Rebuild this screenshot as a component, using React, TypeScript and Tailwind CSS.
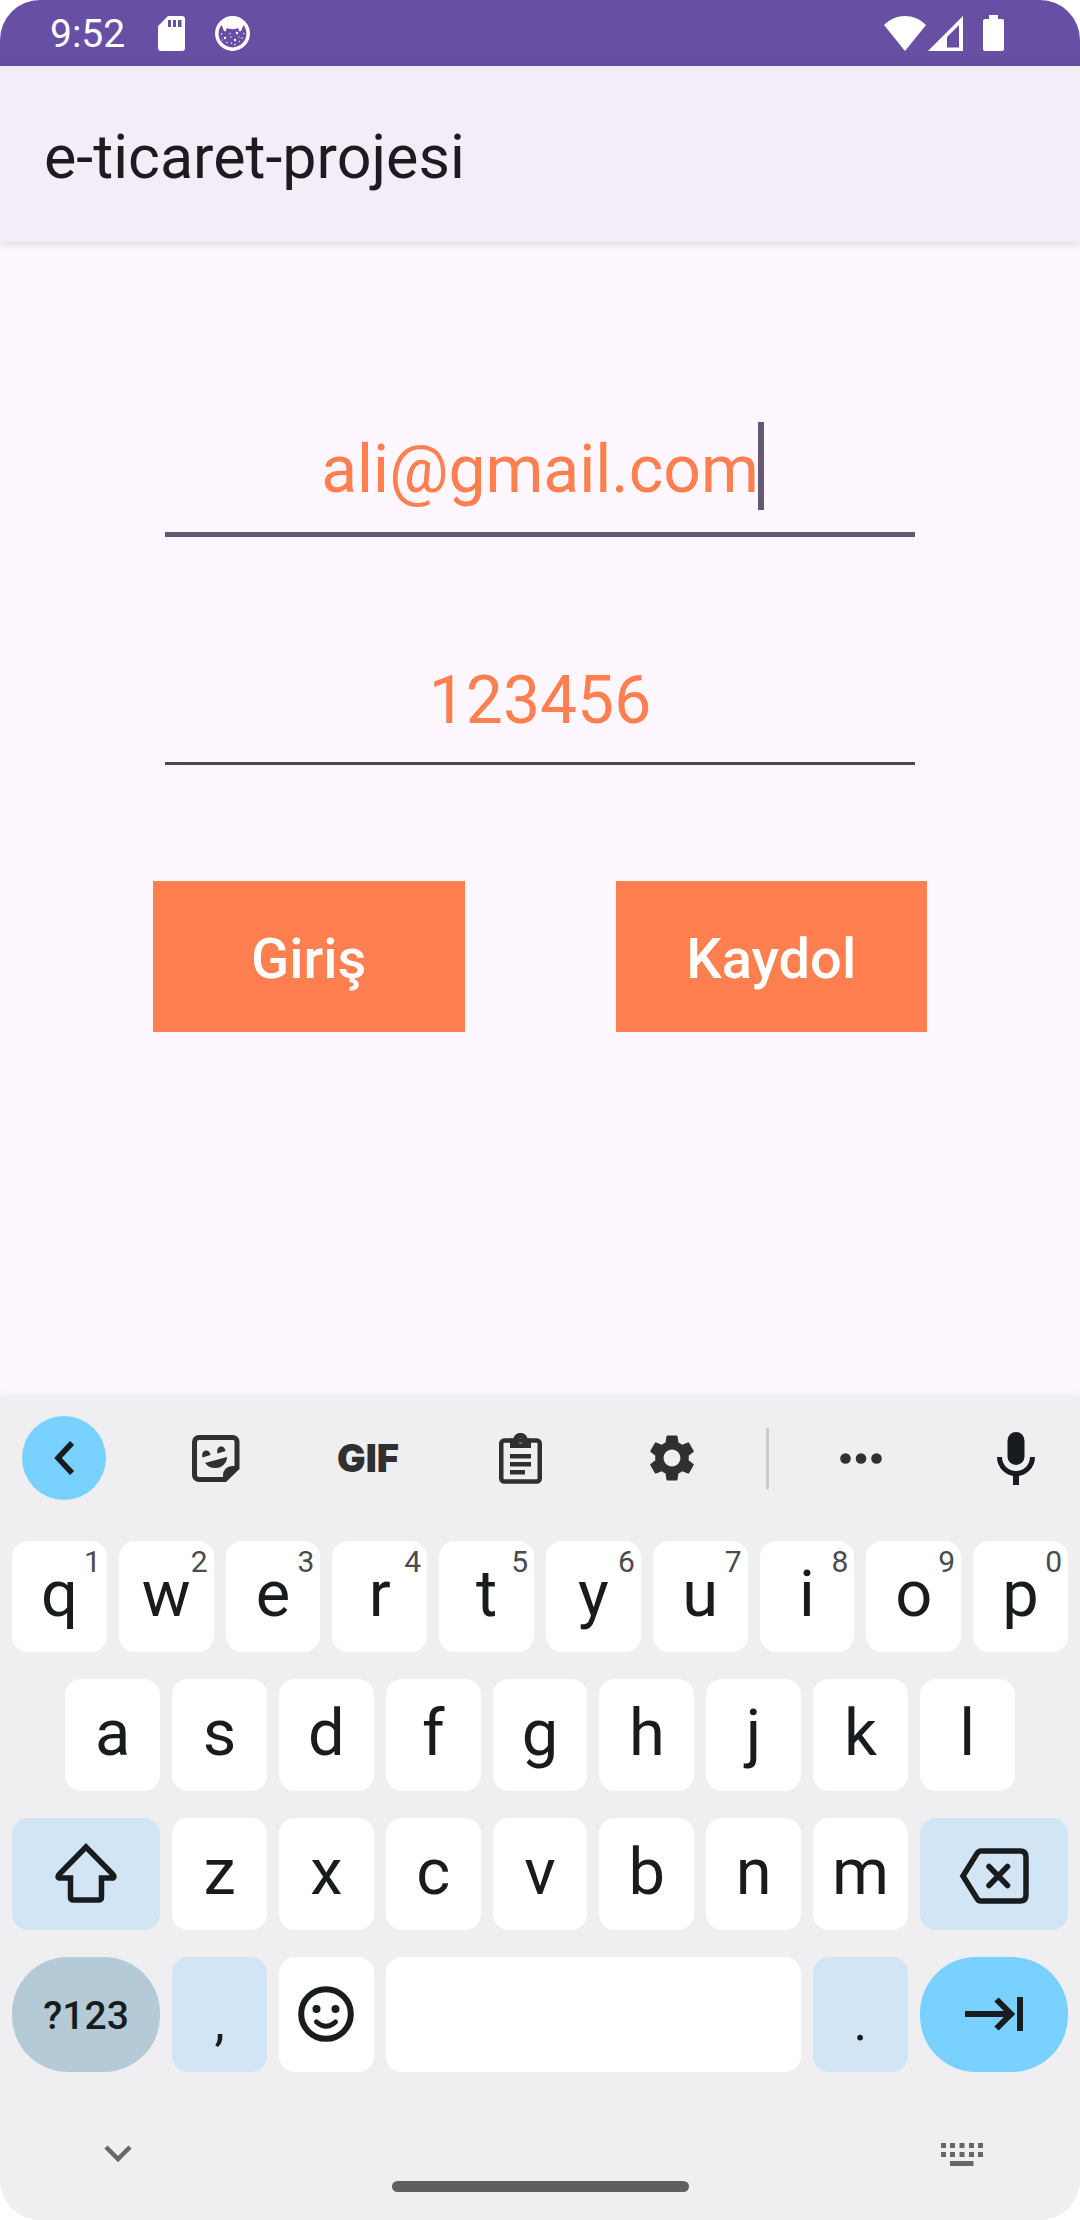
import React from "react";
import { MdSettings } from "react-icons/md";

const INK = "#191c1e";
const TOOL = "#303030";

function StatusBar() {
  return (
    <div className="flex h-[66px] items-center justify-between bg-[#6750a4] pl-[50px] pr-[76px] text-white">
      <div className="flex items-center">
        <span className="w-[108px] pt-[2px] text-[39px] leading-[64px]">9:52</span>
        <svg width="27" height="35" viewBox="0 0 27 35" fill="currentColor" aria-hidden="true">
          <path
            fillRule="evenodd"
            d="M10 0H24a3 3 0 0 1 3 3V32a3 3 0 0 1-3 3H3a3 3 0 0 1-3-3V10ZM10 4v7h3V4ZM15 4v7h3V4ZM20 4v7h3.500V4Z"
          />
        </svg>
        <svg className="ml-[30px]" width="35" height="35" viewBox="0 0 35 35" fill="currentColor" aria-hidden="true">
          <circle cx="17.500" cy="17.500" r="15.700" fill="none" stroke="currentColor" strokeWidth="3.500" />
          <path d="M5 8C8 3 12 1 17.500 1S27 3 30 8L28 10l-2 5-1.500 0.500L23 12C20 13.500 15 13.500 12 12l-1.500 3.500L9 15 7 10Z" />
          <g>
            <circle cx="10" cy="22" r="1.200" />
            <circle cx="20" cy="24" r="1.200" />
            <circle cx="22" cy="17" r="1.200" />
            <circle cx="15" cy="17.500" r="0.700" />
            <circle cx="16" cy="21" r="0.700" />
            <circle cx="27" cy="22" r="0.800" />
            <circle cx="24" cy="21" r="0.600" />
            <circle cx="6.500" cy="18" r="0.700" />
            <circle cx="7.500" cy="24" r="0.600" />
            <circle cx="12" cy="26.500" r="0.700" />
            <circle cx="16.500" cy="27" r="0.700" />
            <circle cx="20" cy="28.500" r="0.800" />
            <circle cx="24.500" cy="25.500" r="0.700" />
            <circle cx="29" cy="17.500" r="0.700" />
          </g>
        </svg>
      </div>
      <div className="flex items-center">
        <svg width="42" height="35" viewBox="0 0 42 35" fill="currentColor" aria-hidden="true">
          <path d="M0 9C12-3 30-3 42 9L21 35Z" />
        </svg>
        <svg className="ml-[2px]" width="35" height="35" viewBox="0 0 35 35" fill="currentColor" aria-hidden="true">
          <path fillRule="evenodd" d="M0 35 35 0V35ZM19 21V31.500H31V9Z" />
        </svg>
        <svg className="ml-5" width="21" height="36" viewBox="0 0 21 36" fill="currentColor" aria-hidden="true">
          <path d="M6 0h9v4h4a2 2 0 0 1 2 2v28a2 2 0 0 1-2 2H2a2 2 0 0 1-2-2V6a2 2 0 0 1 2-2h4Z" />
        </svg>
      </div>
    </div>
  );
}

function LoginForm() {
  return (
    <form className="px-[153px] pt-44" onSubmit={(e) => e.preventDefault()}>
      <div className="px-3">
        <div className="relative">
          <input
            type="email"
            aria-label="E-posta"
            defaultValue="ali@gmail.com"
            className="block h-[119px] w-full border-b-[5px] border-[#625b71] bg-transparent pb-3 text-center text-[66px] text-[#ff7f50] outline-none"
          />
          <span className="absolute left-1/2 top-1 ml-[218px] h-[88px] w-[6px] bg-[#625b71]" />
        </div>
        <input
          type="text"
          aria-label="Şifre"
          defaultValue="123456"
          className="mt-[113px] block h-[115px] w-full border-b-[3px] border-[#49454f] bg-transparent pb-3 text-center text-[66px] text-[#ff7f50] outline-none"
        />
      </div>
      <div className="mt-[116px] flex gap-[151px]">
        <button type="submit" className="h-[151px] flex-1 bg-[#ff7f50] pt-1 text-[56px] font-medium text-white">
          Giriş
        </button>
        <button type="button" className="h-[151px] flex-1 bg-[#ff7f50] pt-1 text-[56px] font-medium text-white">
          Kaydol
        </button>
      </div>
    </form>
  );
}

function ToolButton({ label, children, round }: { label: string; children: React.ReactNode; round?: boolean }) {
  return (
    <button
      type="button"
      aria-label={label}
      className={
        round
          ? "flex size-[84px] items-center justify-center rounded-full bg-[#78d1ff]"
          : "flex size-[84px] items-center justify-center"
      }
    >
      {children}
    </button>
  );
}

function Toolbar() {
  return (
    <div className="flex items-center px-[22px] pb-[41px] pt-5 text-[#303030]">
      <div className="flex gap-[68px]">
        <ToolButton label="Geri" round>
          <svg width="20" height="34" viewBox="0 0 20 34" fill="none" stroke={INK} strokeWidth="5.500">
            <path d="M18 2 4 17 18 32" />
          </svg>
        </ToolButton>
        <ToolButton label="Çıkartma">
          <svg width="48" height="47" viewBox="0 0 48 47" fill={TOOL}>
            <path
              d="M7 2.500H41a4 4 0 0 1 4 4V33L33 44.500H7a4.500 4.500 0 0 1-4.500-4.500V7A4.500 4.500 0 0 1 7 2.500Z"
              fill="none"
              stroke={TOOL}
              strokeWidth="5"
            />
            <path d="M47 31v2L33 47h-2V40a9 9 0 0 1 9-9Z" />
            <path d="M10.500 22.500C9.500 18.500 11 16 13.500 15.500S18 16.500 18.500 20Z" />
            <path d="M25.500 18.500C24.500 14.500 26 12 28.500 11.500S33 12.500 33.500 16Z" />
            <path d="M13 28 35 22C35 28 30 33 23.500 33 18.500 33 15 31 13 28Z" />
          </svg>
        </ToolButton>
        <ToolButton label="GIF">
          <span className="font-[Inter] text-[38px] font-black">GIF</span>
        </ToolButton>
        <ToolButton label="Pano">
          <svg width="43" height="51" viewBox="0 0 43 51" fill={TOOL}>
            <rect x="2.250" y="7.500" width="38.500" height="41" rx="3" fill="none" stroke={TOOL} strokeWidth="4.500" />
            <path
              fillRule="evenodd"
              d="M11 15V5.500h3.500C15 2 18 0 21.500 0S28 2 28.500 5.500H32V15ZM21.500 5a2.700 2.700 0 1 0 0 5.400 2.700 2.700 0 0 0 0-5.400Z"
            />
            <path d="M11 21H32v4.500H11ZM11 29H32v4.500H11ZM11 37H26v4.500H11Z" />
          </svg>
        </ToolButton>
        <ToolButton label="Ayarlar">
          <MdSettings size={56} />
        </ToolButton>
      </div>
      <div className="ml-[52px] mr-[50px] h-[61px] w-[3px] bg-[#cbccce]" />
      <ToolButton label="Diğer">
        <svg width="42" height="11" viewBox="0 0 42 11" fill={TOOL}>
          <circle cx="5.500" cy="5.500" r="5.300" />
          <circle cx="21" cy="5.500" r="5.300" />
          <circle cx="36.500" cy="5.500" r="5.300" />
        </svg>
      </ToolButton>
      <div className="ml-auto">
        <ToolButton label="Sesle yazma">
          <svg width="38" height="53" viewBox="0 0 38 53" fill={INK}>
            <rect x="10.500" y="0" width="17" height="33" rx="8.500" />
            <path d="M2.500 25a16.500 16.500 0 0 0 33 0" fill="none" stroke={INK} strokeWidth="5" />
            <rect x="16" y="42" width="6" height="11" />
          </svg>
        </ToolButton>
      </div>
    </div>
  );
}

function Key({ letter, hint, first }: { letter: string; hint?: string; first?: boolean }) {
  return (
    <button
      type="button"
      className={
        first
          ? "relative col-span-2 col-start-2 rounded-2xl bg-white pb-1 text-[65px] leading-none"
          : "relative col-span-2 rounded-2xl bg-white pb-1 text-[65px] leading-none"
      }
    >
      {letter}
      {hint && (
        <span className="absolute right-[6px] top-[6px] text-[30px] leading-[30px] text-[#4a4b4d]">{hint}</span>
      )}
    </button>
  );
}

function Keyboard() {
  return (
    <section aria-label="Klavye" className="bg-[#efeff2] text-[#191c1e] shadow-[0_0_8px_rgba(103,80,164,0.12)]">
      <Toolbar />
      <div className="grid grid-cols-[repeat(20,minmax(0,1fr))] grid-rows-[111px_112px_112px_115px] gap-x-3 gap-y-[27px] px-3">
        {"qwertyuiop".split("").map((c, i) => (
          <Key key={c} letter={c} hint={String((i + 1) % 10)} />
        ))}
        {"asdfghjkl".split("").map((c, i) => (
          <Key key={c} letter={c} first={i === 0} />
        ))}
        <button
          type="button"
          aria-label="Shift"
          className="col-span-3 col-start-1 flex items-center justify-center rounded-2xl bg-[#d2e5f4] pb-[2px]"
        >
          <svg width="62" height="60" viewBox="0 0 62 60" fill="none" stroke={INK} strokeWidth="5.500">
            <path d="M31 4 4.500 31C2 33.500 3 35 5 35H15.500V54Q15.500 57 18.500 57H43.500Q46.500 57 46.500 54V35H57C59 35 60 33.500 57.500 31Z" />
          </svg>
        </button>
        {"zxcvbnm".split("").map((c) => (
          <Key key={c} letter={c} />
        ))}
        <button
          type="button"
          aria-label="Sil"
          className="col-span-3 flex items-center justify-center rounded-2xl bg-[#d2e5f4] pt-[3px]"
        >
          <svg width="70" height="56" viewBox="0 0 70 56" fill="none" stroke={INK} strokeWidth="5.500">
            <path d="M4 28 18 5.500Q19.500 3 22 3H61Q67 3 67 9V47Q67 53 61 53H22Q19.500 53 18 50.500Z" />
            <path d="m30 18.500 18.500 19M48.500 18.500 30 37.500" strokeLinecap="round" />
          </svg>
        </button>
        <button type="button" className="col-span-3 rounded-[56px] bg-[#b4cad7] pt-1 text-[39px] font-medium">
          ?123
        </button>
        <button type="button" className="col-span-2 rounded-2xl bg-[#d2e5f4] pt-4 text-[52px] leading-none">
          ,
        </button>
        <button
          type="button"
          aria-label="Emoji"
          className="col-span-2 flex items-center justify-center rounded-2xl bg-white pb-[2px]"
        >
          <svg width="56" height="56" viewBox="0 0 56 56" fill={INK}>
            <circle cx="28" cy="28" r="24.800" fill="none" stroke={INK} strokeWidth="6" />
            <circle cx="18.500" cy="23" r="4" />
            <circle cx="37.500" cy="23" r="4" />
            <path d="M18.500 36q9.500 8.500 19 0" fill="none" stroke={INK} strokeWidth="5" strokeLinecap="round" />
          </svg>
        </button>
        <button type="button" aria-label="Boşluk" className="col-span-8 rounded-2xl bg-white" />
        <button type="button" className="col-span-2 rounded-2xl bg-[#d2e5f4] pt-4 text-[52px] leading-none">
          .
        </button>
        <button
          type="button"
          aria-label="Sonraki"
          className="col-span-3 flex items-center justify-center rounded-[56px] bg-[#78d1ff] pb-[2px]"
        >
          <svg width="58" height="34" viewBox="0 0 58 34" fill="none" stroke={INK} strokeWidth="6">
            <path d="M0 17H46M31.500 2.500 46 17 31.500 31.500M55 0V34" />
          </svg>
        </button>
      </div>
      <div className="flex items-center justify-between px-[76px] pb-6 pt-10">
        <button type="button" aria-label="Klavyeyi gizle" className="flex size-[84px] items-center justify-center">
          <svg width="28" height="18" viewBox="0 0 28 18" fill="none" stroke="#676769" strokeWidth="4.500">
            <path d="M2 2 14 14 26 2" />
          </svg>
        </button>
        <div className="mb-1 h-[11px] w-[297px] self-end rounded-full bg-[#5f5f5f]" />
        <button type="button" aria-label="Klavye seç" className="flex size-[84px] items-center justify-center">
          <svg width="42" height="23" viewBox="0 0 42 23" fill="#676769">
            <path d="M0 0h5v5H0ZM9 0h5v5H9ZM18.500 0h5v5h-5ZM28 0h5v5h-5ZM37 0h5v5h-5ZM0 9h5v5H0ZM9 9h5v5H9ZM18.500 9h5v5h-5ZM28 9h5v5h-5ZM37 9h5v5h-5ZM9 18h23.500v5H9Z" />
          </svg>
        </button>
      </div>
    </section>
  );
}

export default function App() {
  return (
    <div className="bg-white">
      <div className="flex min-h-screen flex-col overflow-hidden rounded-[40px] bg-[#fef7ff] font-[Roboto,sans-serif]">
        <StatusBar />
        <header className="flex h-[176px] items-center bg-[#f3edf7] pl-11 pt-2 shadow-[0_2px_10px_rgba(0,0,0,0.14)]">
          <h1 className="text-[61px] text-[#1d1b20]">e-ticaret-projesi</h1>
        </header>
        <main className="flex-1">
          <LoginForm />
        </main>
        <Keyboard />
      </div>
    </div>
  );
}
